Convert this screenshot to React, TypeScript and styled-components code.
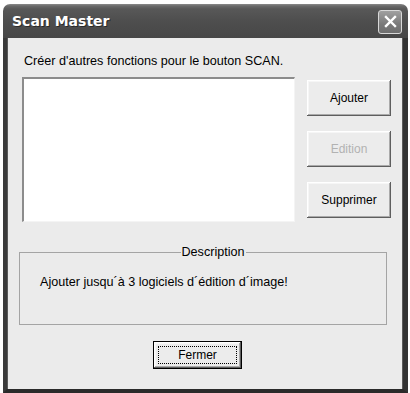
import React from "react";
import styled, { createGlobalStyle } from "styled-components";

const Global = createGlobalStyle`
  html, body { margin: 0; padding: 0; background: #ffffff; }
  body { font-family: "Liberation Sans", Arial, sans-serif; font-size: 12px; color: #000; }
`;

const Window = styled.div`
  margin: 4px 0 0 3px;
  width: 405px;
  display: flex;
  flex-direction: column;
`;

const TitleBar = styled.div`
  height: 34px;
  box-sizing: border-box;
  border-radius: 7px 7px 0 0;
  background: linear-gradient(#8a8a8a 0px, #6a6a6a 2px, #585858 5px, #4e4e4e 50%, #474747 100%);
  display: flex;
  align-items: center;
  justify-content: space-between;
  padding: 0 6px 0 9px;
`;

const Title = styled.span`
  font-family: "DejaVu Sans", Verdana, sans-serif;
  font-weight: bold;
  font-size: 14px;
  color: #ffffff;
  text-shadow: 1px 1px 0 #2a2a2a;
`;

const CloseButton = styled.div`
  width: 24px;
  height: 24px;
  box-sizing: border-box;
  border: 1px solid #d8d8d8;
  border-radius: 3px;
  background: linear-gradient(#a0a0a0, #7a7a7a 60%, #6e6e6e);
  display: flex;
  align-items: center;
  justify-content: center;
  margin-top: 1px;
`;

const Frame = styled.div`
  background: #ebebeb;
  border-left: 4px solid #3a3a3a;
  border-right: 5px solid #333333;
  border-bottom: 4px solid #2a2a2a;
  box-shadow: inset 1px 0 0 #5a5a5a, inset -1px 0 0 #5a5a5a;
  height: 351px;
  display: flex;
  flex-direction: column;
`;

const Label = styled.div`
  margin: 16px 0 0 17px;
  line-height: 14px;
  font-size: 12.6px;
`;

const MainRow = styled.div`
  display: flex;
  margin: 9px 0 0 15px;
  gap: 12px;
`;

const ListBox = styled.div`
  width: 273px;
  height: 145px;
  box-sizing: border-box;
  background: #ffffff;
  border-top: 2px solid #8c8c8c;
  border-left: 2px solid #8c8c8c;
  border-right: 1px solid #f4f4f4;
  border-bottom: 1px solid #f4f4f4;
`;

const ButtonColumn = styled.div`
  display: flex;
  flex-direction: column;
  gap: 15px;
  padding-top: 3px;
`;

const Button = styled.div<{ $disabled?: boolean; $width?: number; $height?: number }>`
  width: ${(p) => p.$width ?? 84}px;
  height: ${(p) => p.$height ?? 36}px;
  box-sizing: border-box;
  background: #ececec;
  display: flex;
  align-items: center;
  justify-content: center;
  font-size: 12px;
  color: ${(p) => (p.$disabled ? "#b2b2b2" : "#000000")};
  box-shadow: inset -1px -1px 0 #5e5e5e, inset 1px 1px 0 #ffffff,
    inset -2px -2px 0 #aaaaaa, inset 2px 2px 0 #f6f6f6;
`;

const DefaultButton = styled(Button)`
  border: 1px solid #000000;
`;

const FocusRing = styled.span`
  display: flex;
  align-items: center;
  justify-content: center;
  width: calc(100% - 8px);
  height: calc(100% - 8px);
  box-sizing: border-box;
  border: 1px dotted #000000;
`;

const GroupBox = styled.fieldset`
  margin: 23px 0 0 12px;
  width: 368px;
  height: 80px;
  box-sizing: border-box;
  border: 1px solid #a4a4a4;
  padding: 0 0 0 20px;
`;

const Legend = styled.legend`
  margin: 0 auto;
  padding: 0 1px;
  font-size: 12.6px;
  line-height: 14px;
`;

const Description = styled.div`
  margin-top: 16px;
  line-height: 14px;
  font-size: 12.6px;
`;

const Footer = styled.div`
  display: flex;
  justify-content: center;
  margin-top: 16px;
  padding-right: 15px;
`;

export default function App() {
  return (
    <>
      <Global />
      <Window>
        <TitleBar>
          <Title>Scan Master</Title>
          <CloseButton>
            <svg width="13" height="13" viewBox="0 0 13 13">
              <path d="M2 2 L11 11 M11 2 L2 11" stroke="#ffffff" strokeWidth="2.4" strokeLinecap="square" />
            </svg>
          </CloseButton>
        </TitleBar>
        <Frame>
          <Label>Créer d'autres fonctions pour le bouton SCAN.</Label>
          <MainRow>
            <ListBox />
            <ButtonColumn>
              <Button>Ajouter</Button>
              <Button $disabled>Edition</Button>
              <Button>Supprimer</Button>
            </ButtonColumn>
          </MainRow>
          <GroupBox>
            <Legend>Description</Legend>
            <Description>Ajouter jusqu´à 3 logiciels d´édition d´image!</Description>
          </GroupBox>
          <Footer>
            <DefaultButton $width={89} $height={28}>
              <FocusRing>Fermer</FocusRing>
            </DefaultButton>
          </Footer>
        </Frame>
      </Window>
    </>
  );
}
